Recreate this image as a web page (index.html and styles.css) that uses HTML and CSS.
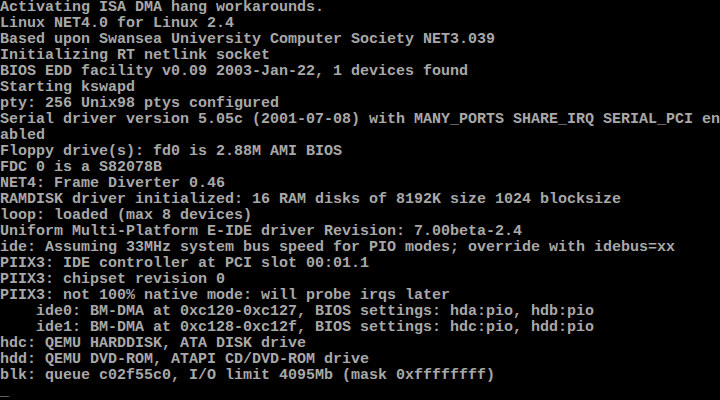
FILE: index.html
```html
<!DOCTYPE html>
<html>
<head>
<meta charset="utf-8">
<link rel="stylesheet" href="styles.css">
</head>
<body>
<pre class="console">Activating ISA DMA hang workarounds.
Linux NET4.0 for Linux 2.4
Based upon Swansea University Computer Society NET3.039
Initializing RT netlink socket
BIOS EDD facility v0.09 2003-Jan-22, 1 devices found
Starting kswapd
pty: 256 Unix98 ptys configured
Serial driver version 5.05c (2001-07-08) with MANY_PORTS SHARE_IRQ SERIAL_PCI en
abled
Floppy drive(s): fd0 is 2.88M AMI BIOS
FDC 0 is a S82078B
NET4: Frame Diverter 0.46
RAMDISK driver initialized: 16 RAM disks of 8192K size 1024 blocksize
loop: loaded (max 8 devices)
Uniform Multi-Platform E-IDE driver Revision: 7.00beta-2.4
ide: Assuming 33MHz system bus speed for PIO modes; override with idebus=xx
PIIX3: IDE controller at PCI slot 00:01.1
PIIX3: chipset revision 0
PIIX3: not 100% native mode: will probe irqs later
    ide0: BM-DMA at 0xc120-0xc127, BIOS settings: hda:pio, hdb:pio
    ide1: BM-DMA at 0xc128-0xc12f, BIOS settings: hdc:pio, hdd:pio
hdc: QEMU HARDDISK, ATA DISK drive
hdd: QEMU DVD-ROM, ATAPI CD/DVD-ROM drive
blk: queue c02f55c0, I/O limit 4095Mb (mask 0xffffffff)
_</pre>
</body>
</html>
```
FILE: styles.css
```css
html, body {
  margin: 0;
  padding: 0;
  background: #000000;
  width: 720px;
  height: 400px;
  overflow: hidden;
}
.console {
  margin: 0;
  padding: 0;
  color: #a8a8a8;
  font-family: "Liberation Mono", "DejaVu Sans Mono", monospace;
  font-size: 15px;
  font-weight: bold;
  line-height: 16px;
  white-space: pre;
}
```
